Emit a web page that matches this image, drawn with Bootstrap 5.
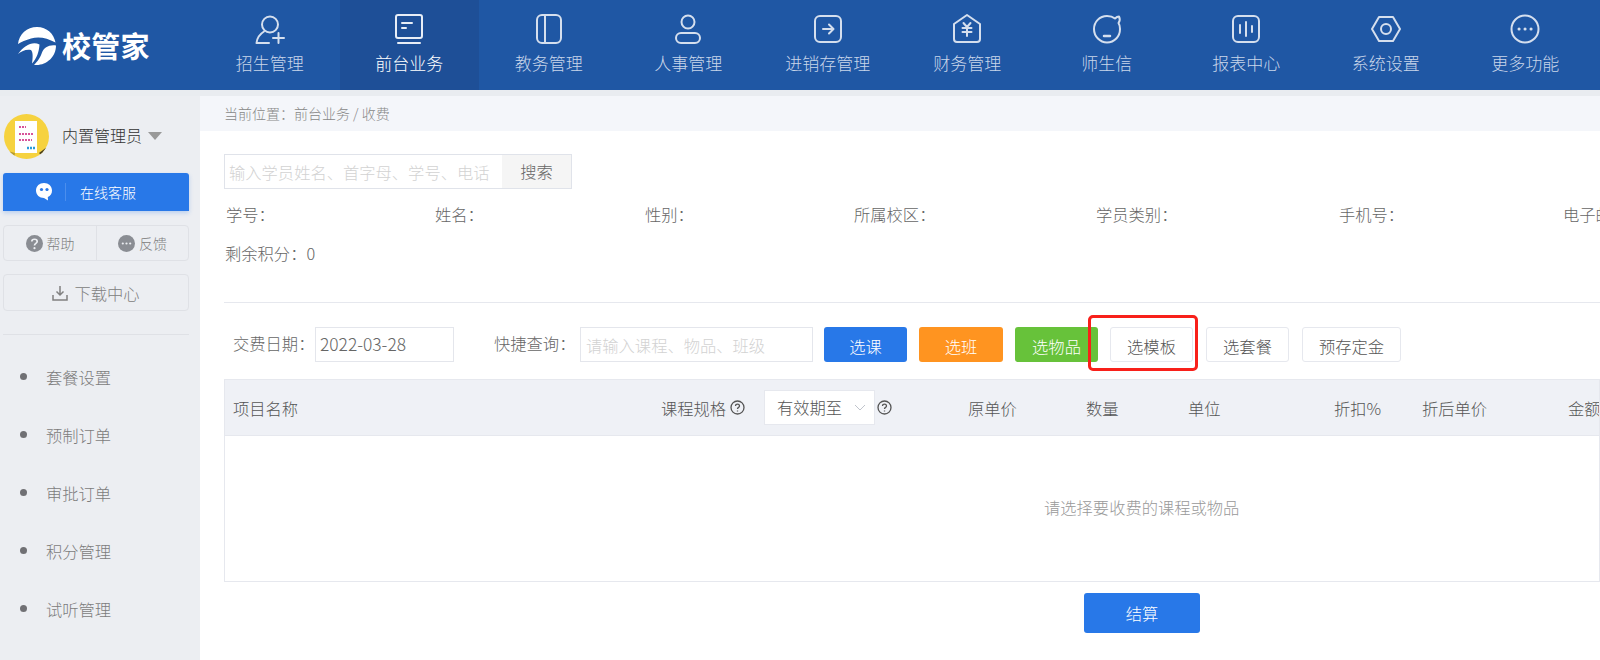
<!DOCTYPE html>
<html lang="zh-CN">
<head>
<meta charset="utf-8">
<title>校管家</title>
<link href="https://cdn.jsdelivr.net/npm/bootstrap@5.3.0/dist/css/bootstrap.min.css" rel="stylesheet">
<style>
html,body{height:660px;overflow:hidden;background:#fff}
body{font-family:"Noto Sans CJK SC","Liberation Sans",sans-serif;color:#666;font-size:16.3px;line-height:24px;font-weight:300}
.topbar{height:90px;background:#1f57a4}
.brandbox{width:200px;padding:27px 0 0 17px;gap:5px;color:#fff}
.brandname{font-size:29px;font-weight:700;line-height:36px;letter-spacing:.3px}
.navcell{width:139.5px;color:#c9d6ea;font-size:17px;line-height:24px;padding-top:13px;text-decoration:none}
.navcell svg{display:block;margin:0 auto 6px;width:32px;height:32px;fill:none;stroke:#d5dfee;stroke-width:2;stroke-linecap:round;stroke-linejoin:round}
.navcell.on{background:#1e4f97;color:#fff}
.navcell.on svg{stroke:#e8eef7}
.strip{height:6px;background:#e9ecf0}
.sidepane{width:200px;height:564px;background:#eceef2;padding:0 11px 0 3px}
.userline{height:45px;margin-top:18px;padding-left:1px;color:#333;font-size:16px}
.avatarimg{width:45px;height:45px;margin-right:13px}
.username{position:relative;top:-2px}
.caret{width:0;height:0;border:7px solid transparent;border-top:8px solid #999;border-bottom:0;margin:-2px 0 0 6px}
.chatbtn{height:38px;margin-top:14px;background:#2878e8;border-radius:3px 3px 0 0;color:#fff;font-size:14px;box-shadow:0 2px 4px rgba(40,120,232,.25);padding-left:33px}
.chatdiv{width:1px;height:18px;background:#4b8eed;margin:0 14px 0 13px}
.helpgroup{height:36px;margin-top:14px;border:1px solid #dfe1e6;border-radius:4px;font-size:14px;color:#808080}
.helpgroup>div{width:50%;gap:4px}
.helpgroup>div+div{border-left:1px solid #dfe1e6}
.dlbox{height:37px;margin-top:13px;border:1px solid #dfe1e6;border-radius:4px;color:#808080;gap:6px}
.sidehr{height:1px;background:#dfe1e6;margin-top:23px;margin-bottom:13px}
.menuline{height:58px;color:#7c7c7c;padding-left:17px;font-size:16.3px}
.menuline i{display:block;width:7px;height:7px;border-radius:50%;background:#707074;margin-right:19px;margin-top:-1px}
.mainpane{width:1400px;height:564px;overflow:hidden;position:relative}
.crumb{height:35px;background:#f4f6fa;font-size:14px;color:#888;padding:0 0 2px 24px}
.bodypad{padding-left:24px;width:1400px}
.findgroup{width:349px;margin-top:23px}
.findgroup .form-control{height:35px;padding:0 4px;font-size:16.3px;font-weight:300;border:1px solid #e0e3ea;border-radius:0;width:279px;flex:none}
.findgroup .btn{height:35px;width:70px;padding:0;font-size:16.3px;font-weight:300;background:#f5f5f5;border:1px solid #e0e3ea;border-left:0;border-radius:0;color:#666}
.form-control::placeholder{color:#d2d2d2}
.inforow{margin-top:13px;padding-left:2px;white-space:nowrap}
.w209{width:209px}.w210{width:210px}.w242{width:242px}.w243{width:243px}.w224{width:224px}
.secondrow{margin-top:15px;padding-left:1px}
.ruleline{height:1px;background:#e6e8ee;margin-top:37px}
.toolline{margin-top:24px;height:35px;white-space:nowrap;width:1376px}
.lbl1{margin:-3px 0 0 9px;width:82px}
.lbl2{margin:-3px 0 0 40px;width:86px}
.toolline .form-control{height:35px;border:1px solid #e4e6ec;border-radius:0;font-size:16.3px;font-weight:300;padding:0 5px;color:#666}
.toolline .form-control.dateinp{width:139px;flex:none;font-size:17.4px;padding:0 4px 3px}
.qinp{width:233px;flex:none}
.actbtn{height:35px;font-size:16.3px;font-weight:300;padding:3px 0 0;border-radius:3px;line-height:24px;color:#fff;border:1px solid transparent}
.actbtn:hover{color:#fff}
.b-blue{background:#2878e8;width:83px;margin-left:11px}
.b-orange{background:#ff9420;width:84px;margin-left:12px}
.b-green{background:#67c23a;width:83px;margin-left:12px}
.b-plain{background:#fff;border:1px solid #e6e8ee;color:#555}
.b-plain:hover{color:#555}
.w83a{width:83px;margin-left:12px}.w83{width:83px;margin-left:13px}.w98{width:99px;margin-left:13px}
.redmark{position:absolute;left:888px;top:219px;width:110px;height:56px;border:3px solid #f8201a;border-radius:5px;pointer-events:none}
.gridhead{margin-top:17px;height:57px;width:1376px;background:#eff1f6;border:1px solid #e6e8ee;white-space:nowrap;overflow:hidden;color:#555}
.gridhead span,.gridhead select,.gridhead svg{flex:none}
.c1{margin-left:8px;width:428px}
.c2{width:69px}
.qm{width:15px;height:15px;fill:none;stroke:#555;stroke-width:1.3}
.form-select.validsel{width:111px;height:35px;margin-left:19px;margin-right:2px;border:1px solid #e6e8ee;border-radius:0;font-size:16.3px;font-weight:300;padding:0 0 0 12px;color:#555;background-color:#fff;background-position:right 6px center;background-size:16px 12px;background-image:url("data:image/svg+xml,%3Csvg xmlns='http://www.w3.org/2000/svg' viewBox='0 0 16 12'%3E%3Cpath d='M3 3l5 5 5-5' fill='none' stroke='%23c0c4cc' stroke-width='1'/%3E%3C/svg%3E")}
.c3{margin-left:76px;width:118px}
.c4{width:102px}
.c5{width:146px}
.c6{width:88px}
.c7{width:146px}
.c8{width:50px}
.gridbody{width:1376px;height:146px;border:1px solid #e6e8ee;border-top:0;color:#999;padding:0 0 3px 819px}
.paybtn{width:116px;height:40px;margin:11px 0 0 860px;background:#2878e8;color:#fff;font-size:16.3px;font-weight:300;border-radius:3px;padding:0;border:0}
.paybtn:hover{color:#fff;background:#2878e8}
</style>
</head>
<body>
<header class="topbar d-flex">
  <div class="brandbox d-flex align-items-start">
    <svg width="40" height="38" viewBox="0 0 40 38"><path d="M1 17C2 7 10 0 20 0C30 0 37 7 38.500 15.500C30 11 22 9 14 11.500C9 13 4 15 1 17Z" fill="#fff"/><path d="M39 18.500C39 29.500 30 38 19.500 38C18.500 38 18 38 17 37.800C21 34 23 31 25 25.500C27 20.500 32 17.500 39 18.500Z" fill="#fff"/><path d="M1 27C7 19 15 14 22.500 17.500C22 25 20 31 15 36.500C16 30 16 25 14 23C9 22 5 24 1 27Z" fill="#fff"/></svg>
    <span class="brandname">校管家</span>
  </div>
  <nav class="d-flex">
    <a class="navcell text-center" href="#"><svg viewBox="0 0 32 32"><circle cx="16" cy="11.500" r="8"/><path d="M10 18.500C6 21 3 25 2.500 30H15M19 25H30M24.500 20V30"/></svg>招生管理</a>
    <a class="navcell on text-center" href="#"><svg viewBox="0 0 32 32"><rect x="3" y="2" width="26" height="23" rx="2"/><path d="M9 10H19M9 15H13M5 30H27"/></svg>前台业务</a>
    <a class="navcell text-center" href="#"><svg viewBox="0 0 32 32"><rect x="4" y="2" width="24" height="28" rx="5"/><path d="M12 2V30"/></svg>教务管理</a>
    <a class="navcell text-center" href="#"><svg viewBox="0 0 32 32"><circle cx="16" cy="9" r="6.500"/><rect x="4" y="20" width="24" height="10" rx="5"/></svg>人事管理</a>
    <a class="navcell text-center" href="#"><svg viewBox="0 0 32 32"><rect x="3" y="3" width="26" height="26" rx="5"/><path d="M11 16H21M17 11.500L21.500 16L17 20.500"/></svg>进销存管理</a>
    <a class="navcell text-center" href="#"><svg viewBox="0 0 32 32"><path d="M3 11L16 2L29 11V26C29 28 28 29 26 29H6C4 29 3 28 3 26Z"/><path d="M12.500 10L16 14L19.500 10M11.500 15H20.500M11.500 19H20.500M16 14V23"/></svg>财务管理</a>
    <a class="navcell text-center" href="#"><svg viewBox="0 0 32 32"><path d="M24 5.500C21.500 3.500 19 3 16 3C8.500 3 3 9 3 16C3 23.500 9 29.500 16 29.500C23.500 29.500 29 23.500 29 16C29 13.500 28.500 11.500 27.500 10C29 8 29 5.500 28 3.500C26.500 3.500 25 4.500 24 5.500Z"/><path d="M13 23H19" stroke-width="2.500"/></svg>师生信</a>
    <a class="navcell text-center" href="#"><svg viewBox="0 0 32 32"><rect x="3" y="3" width="26" height="26" rx="5"/><path d="M10 12V20M16 9V23M22 13V19"/></svg>报表中心</a>
    <a class="navcell text-center" href="#"><svg viewBox="0 0 32 32"><path d="M9 4H23L30 16L23 28H9L2 16Z"/><circle cx="16" cy="16" r="5"/></svg>系统设置</a>
    <a class="navcell text-center" href="#"><svg viewBox="0 0 32 32"><circle cx="16" cy="16" r="13.500"/><path d="M10 16H10.100M16 16H16.100M22 16H22.100" stroke-width="3"/></svg>更多功能</a>
  </nav>
</header>
<div class="strip"></div>
<div class="d-flex">
  <aside class="sidepane flex-shrink-0">
    <div class="userline d-flex align-items-center">
      <svg class="avatarimg" viewBox="0 0 45 45"><defs><clipPath id="avclip"><circle cx="22.500" cy="22.500" r="22.500"/></clipPath></defs><g clip-path="url(#avclip)"><rect width="45" height="45" fill="#f6d23f"/><path d="M0 36L11 39L10 45H0Z" fill="#b59a30"/><path d="M35 39L43 33L45 36L38 42Z" fill="#4a4020"/><rect x="11" y="7" width="22" height="32" fill="#fff"/><path d="M15 13H22M15 20H29M15 26H28" stroke="#d8549a" stroke-width="2.200" stroke-dasharray="2 1"/><path d="M23 34H31" stroke="#2a9bd8" stroke-width="2.500" stroke-dasharray="2 1"/></g></svg>
      <span class="username">内置管理员</span><span class="caret"></span>
    </div>
    <div class="chatbtn d-flex align-items-center">
      <svg width="16" height="18" viewBox="0 0 16 18"><path d="M8 0C3.500 0 0 3 0 7.500C0 12 3.500 15 8 15L12 17.500L11.800 14C14.500 13 16 10.500 16 7.500C16 3 12.500 0 8 0Z" fill="#fff"/><circle cx="5.500" cy="6.500" r="1.600" fill="#2878e8"/><circle cx="11" cy="6.500" r="1.600" fill="#2878e8"/></svg>
      <span class="chatdiv"></span><span>在线客服</span>
    </div>
    <div class="helpgroup d-flex">
      <div class="d-flex align-items-center justify-content-center">
        <svg width="17" height="17" viewBox="0 0 17 17"><circle cx="8.500" cy="8.500" r="8.500" fill="#8a8d93"/><path d="M5.800 6.500C5.800 3.500 11.200 3.500 11.200 6.500C11.200 8.500 8.500 8.300 8.500 10.500" fill="none" stroke="#eceef2" stroke-width="1.700"/><circle cx="8.500" cy="13.200" r="1.100" fill="#eceef2"/></svg><span>帮助</span>
      </div>
      <div class="d-flex align-items-center justify-content-center">
        <svg width="17" height="17" viewBox="0 0 17 17"><circle cx="8.500" cy="8.500" r="8.500" fill="#8a8d93"/><circle cx="4.800" cy="8.500" r="1.100" fill="#eceef2"/><circle cx="8.500" cy="8.500" r="1.100" fill="#eceef2"/><circle cx="12.200" cy="8.500" r="1.100" fill="#eceef2"/></svg><span>反馈</span>
      </div>
    </div>
    <div class="dlbox d-flex align-items-center justify-content-center">
      <svg width="16" height="16" viewBox="0 0 16 16" fill="none" stroke="#808080" stroke-width="1.500"><path d="M8 1V10M4.500 6.500L8 10L11.500 6.500M1 10V15H15V10"/></svg><span>下载中心</span>
    </div>
    <div class="sidehr"></div>
    <div class="menuline d-flex align-items-center"><i></i>套餐设置</div>
    <div class="menuline d-flex align-items-center"><i></i>预制订单</div>
    <div class="menuline d-flex align-items-center"><i></i>审批订单</div>
    <div class="menuline d-flex align-items-center"><i></i>积分管理</div>
    <div class="menuline d-flex align-items-center"><i></i>试听管理</div>
  </aside>
  <main class="mainpane">
    <div class="crumb d-flex align-items-center">当前位置：前台业务 / 收费</div>
    <div class="bodypad">
      <div class="input-group findgroup">
        <input class="form-control" type="text" placeholder="输入学员姓名、首字母、学号、电话">
        <button class="btn" type="button">搜索</button>
      </div>
      <div class="inforow d-flex">
        <div class="w209 flex-shrink-0">学号：</div><div class="w210 flex-shrink-0">姓名：</div><div class="w209 flex-shrink-0">性别：</div><div class="w242 flex-shrink-0">所属校区：</div><div class="w243 flex-shrink-0">学员类别：</div><div class="w224 flex-shrink-0">手机号：</div><div class="flex-shrink-0">电子邮箱：</div>
      </div>
      <div class="secondrow">剩余积分：0</div>
      <div class="ruleline"></div>
      <div class="toolline d-flex align-items-center">
        <span class="lbl1 flex-shrink-0">交费日期：</span>
        <input class="form-control dateinp" type="text" value="2022-03-28">
        <span class="lbl2 flex-shrink-0">快捷查询：</span>
        <input class="form-control qinp" type="text" placeholder="请输入课程、物品、班级">
        <button class="btn actbtn b-blue" type="button">选课</button>
        <button class="btn actbtn b-orange" type="button">选班</button>
        <button class="btn actbtn b-green" type="button">选物品</button>
        <button class="btn actbtn b-plain w83a" type="button">选模板</button>
        <button class="btn actbtn b-plain w83" type="button">选套餐</button>
        <button class="btn actbtn b-plain w98" type="button">预存定金</button>
      </div>
      <div class="redmark"></div>
      <div class="gridhead d-flex align-items-center">
        <span class="c1">项目名称</span>
        <span class="c2">课程规格</span>
        <svg class="qm" viewBox="0 0 15 15"><circle cx="7.500" cy="7.500" r="6.500"/><path d="M5.500 6C5.500 3.500 9.500 3.500 9.500 6C9.500 7.500 7.500 7.300 7.500 9"/><path d="M7.500 10.500V11.500"/></svg>
        <select class="form-select validsel" aria-label="有效期至"><option>有效期至</option></select>
        <svg class="qm" viewBox="0 0 15 15"><circle cx="7.500" cy="7.500" r="6.500"/><path d="M5.500 6C5.500 3.500 9.500 3.500 9.500 6C9.500 7.500 7.500 7.300 7.500 9"/><path d="M7.500 10.500V11.500"/></svg>
        <span class="c3">原单价</span>
        <span class="c4">数量</span>
        <span class="c5">单位</span>
        <span class="c6">折扣%</span>
        <span class="c7">折后单价</span>
        <span class="c8">金额</span>
      </div>
      <div class="gridbody d-flex align-items-center">请选择要收费的课程或物品</div>
      <button class="btn paybtn d-block" type="button">结算</button>
    </div>
  </main>
</div>
<script src="https://cdn.jsdelivr.net/npm/bootstrap@5.3.0/dist/js/bootstrap.bundle.min.js"></script>
</body>
</html>
